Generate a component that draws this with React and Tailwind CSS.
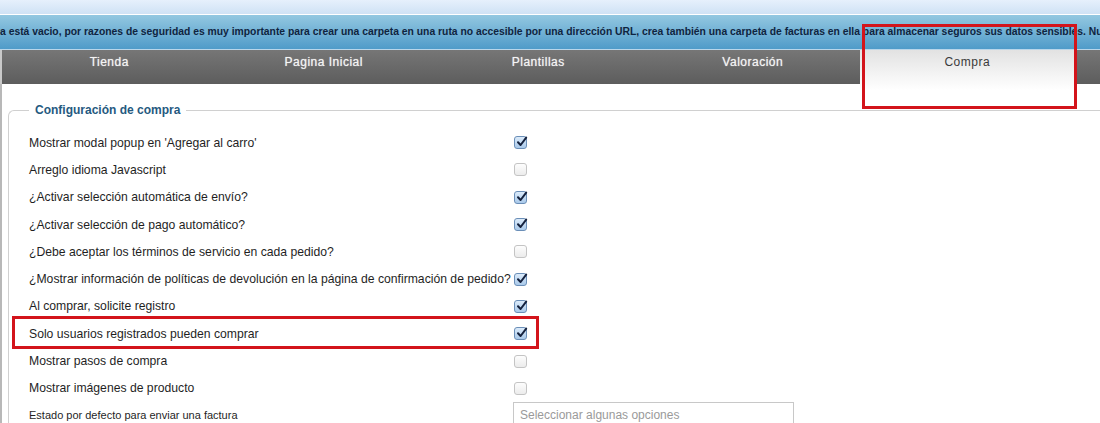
import React from "react";

const tabs = ["Tienda", "Pagina Inicial", "Plantillas", "Valoración", "Compra"];

const rows = [
  ["Mostrar modal popup en 'Agregar al carro'", true],
  ["Arreglo idioma Javascript", false],
  ["¿Activar selección automática de envío?", true],
  ["¿Activar selección de pago automático?", true],
  ["¿Debe aceptar los términos de servicio en cada pedido?", false],
  ["¿Mostrar información de políticas de devolución en la página de confirmación de pedido?", true],
  ["Al comprar, solicite registro", true],
  ["Solo usuarios registrados pueden comprar", true],
  ["Mostrar pasos de compra", false],
  ["Mostrar imágenes de producto", false],
];

const Check = ({ on }) =>
  on ? (
    <span className="relative flex h-[13px] w-[13px] items-center justify-center rounded-[3px] border border-[#6b8fb8] bg-gradient-to-b from-[#dcebfa] to-[#a9c9ea]">
      <svg viewBox="0 0 12 12" className="absolute -top-[1px] left-[1px] h-[12px] w-[12px]">
        <path d="M2 6.2 L4.6 9 L10.2 1.6" fill="none" stroke="#14213d" strokeWidth="2" strokeLinecap="round" strokeLinejoin="round" />
      </svg>
    </span>
  ) : (
    <span className="block h-[13px] w-[13px] rounded-[3px] border border-[#c4c4c4] bg-gradient-to-b from-[#fdfdfd] to-[#ececec]" />
  );

export default function App() {
  return (
    <div className="relative h-[423px] w-[1100px] overflow-hidden bg-white font-['Liberation_Sans',Arial,sans-serif]">
      {/* top band */}
      <div className="h-[14px] bg-gradient-to-b from-[#e6f0fc] to-[#cfe2f5]" />
      <div className="h-px bg-white" />

      {/* notice bar */}
      <div className="flex h-[34px] items-center overflow-hidden whitespace-nowrap bg-gradient-to-b from-[#93c8e1] to-[#4f9bc9] text-[10.35px] font-bold text-[#0f2440]">
        a está vacio, por razones de seguridad es muy importante para crear una carpeta en una ruta no accesible por una dirección URL, crea también una carpeta de facturas en ella para almacenar seguros sus datos sensibles. Nuestra recomendación
      </div>
      <div className="h-px bg-[#b9d6ea]" />

      {/* tabs */}
      <div className="flex h-[34px] border-l-2 border-[#c9c9c9] bg-gradient-to-b from-[#767676] to-[#5d5d5d]">
        {tabs.map((t) => (
          <div
            key={t}
            className={
              t === "Compra"
                ? "flex h-[40px] w-[214.5px] justify-center bg-gradient-to-b from-[#e2e2e2] to-white pt-[3px] text-[12px] tracking-[0.5px] text-[#3a3a3a]"
                : "flex w-[214.5px] justify-center pt-[3px] text-[12px] tracking-[0.5px] text-[#f4f4f4] [text-shadow:0_0_1px_rgba(255,255,255,0.7)]"
            }
          >
            {t}
          </div>
        ))}
      </div>

      {/* content */}
      <div className="h-[400px] border-l-2 border-[#b8b8b8] pl-[6px] pt-[17px]">
        <fieldset className="rounded-tl-[6px] border-l border-t border-[#d0d0d0] pl-[20px]">
          <legend className="px-[6px] text-[12px] font-bold text-[#25597f]">Configuración de compra</legend>
          <div className="pt-[10px]">
            {rows.map(([label, on]) => (
              <div key={label} className="flex h-[27.33px] items-center text-[12.2px] text-[#1f1f1f]">
                <div className="w-[485px]">{label}</div>
                <Check on={on} />
              </div>
            ))}
            <div className="flex items-start text-[11px] text-[#1f1f1f]">
              <div className="w-[484px] pt-[5px]">Estado por defecto para enviar una factura</div>
              <div className="h-[28px] w-[281px] border border-[#c8c8c8] px-[6px] pt-[3px] text-[12px] text-[#9a9a9a]">
                Seleccionar algunas opciones
              </div>
            </div>
          </div>
        </fieldset>
      </div>

      {/* annotation boxes */}
      <div className="absolute left-[862px] top-[24px] h-[85px] w-[215px] border-[3px] border-[#d3141b]" />
      <div className="absolute left-[12px] top-[316px] h-[33px] w-[527px] border-[3px] border-[#d3141b]" />
    </div>
  );
}
